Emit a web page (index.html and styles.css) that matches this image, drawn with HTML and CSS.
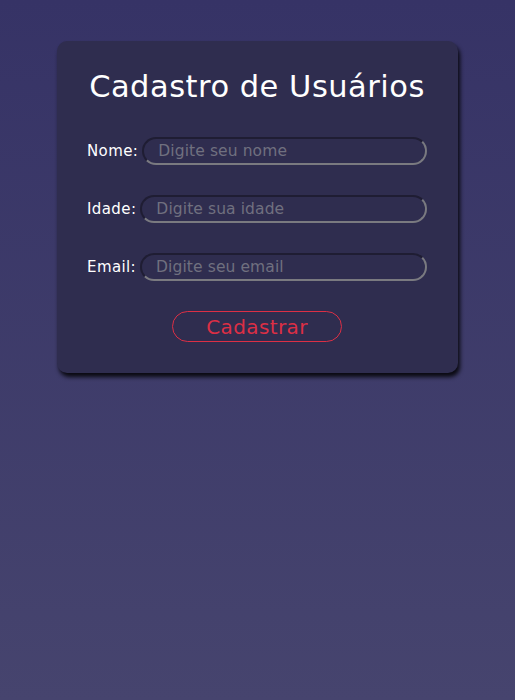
FILE: index.html
```html
<!DOCTYPE html>
<html lang="pt-BR">
<head>
<meta charset="utf-8">
<title>Cadastro de Usuários</title>
<link rel="stylesheet" href="styles.css">
</head>
<body>
<main class="card">
  <h1 class="title">Cadastro de Usuários</h1>
  <form class="form">
    <div class="row">
      <label class="label" for="nome">Nome:</label>
      <input class="field" id="nome" type="text" placeholder="Digite seu nome">
    </div>
    <div class="row">
      <label class="label" for="idade">Idade:</label>
      <input class="field" id="idade" type="text" placeholder="Digite sua idade">
    </div>
    <div class="row">
      <label class="label" for="email">Email:</label>
      <input class="field" id="email" type="text" placeholder="Digite seu email">
    </div>
    <div class="actions">
      <button class="btn" type="button">Cadastrar</button>
    </div>
  </form>
</main>
</body>
</html>
```

FILE: styles.css
```css
html, body {
  margin: 0;
  padding: 0;
  height: 100%;
}

body {
  background: linear-gradient(180deg, #363366 0%, #46446e 100%);
  font-family: "DejaVu Sans", "Open Sans", sans-serif;
  color: #ffffff;
  padding-top: 41px;
  box-sizing: border-box;
}

.card {
  width: 401px;
  margin: 0 auto;
  box-sizing: border-box;
  background: #2f2d4f;
  border-radius: 10px;
  padding: 24px 31px 31px 30px;
  box-shadow: 2px 4px 4px rgba(0, 0, 0, 0.85);
}

.title {
  margin: 0 -10px 28px;
  font-size: 30.5px;
  font-weight: 400;
  letter-spacing: 0.5px;
  line-height: 44px;
  text-align: center;
  white-space: nowrap;
  color: #ffffff;
}

.form {
  display: flex;
  flex-direction: column;
  gap: 30px;
}

.row {
  display: flex;
  align-items: center;
  gap: 4px;
}

.label {
  font-size: 15px;
  letter-spacing: 0.4px;
  color: #ffffff;
}

.field {
  flex: 1;
  min-width: 0;
  height: 28px;
  box-sizing: border-box;
  background: transparent;
  border: 2px solid;
  border-color: #1f1d33 #7a7a80 #7a7a80 #1f1d33;
  border-radius: 14px;
  padding: 0 14px;
  font-family: inherit;
  font-size: 15.5px;
  letter-spacing: 0.1px;
  color: #ffffff;
  outline: none;
}

.field::placeholder {
  color: #70707f;
}

.actions {
  display: flex;
  justify-content: center;
}

.btn {
  width: 170px;
  height: 31px;
  box-sizing: border-box;
  background: transparent;
  border: 1px solid #dc2f45;
  border-radius: 16px;
  color: #dc2f45;
  font-family: inherit;
  font-size: 20px;
  letter-spacing: 0.4px;
  padding: 0;
  cursor: pointer;
}
```
